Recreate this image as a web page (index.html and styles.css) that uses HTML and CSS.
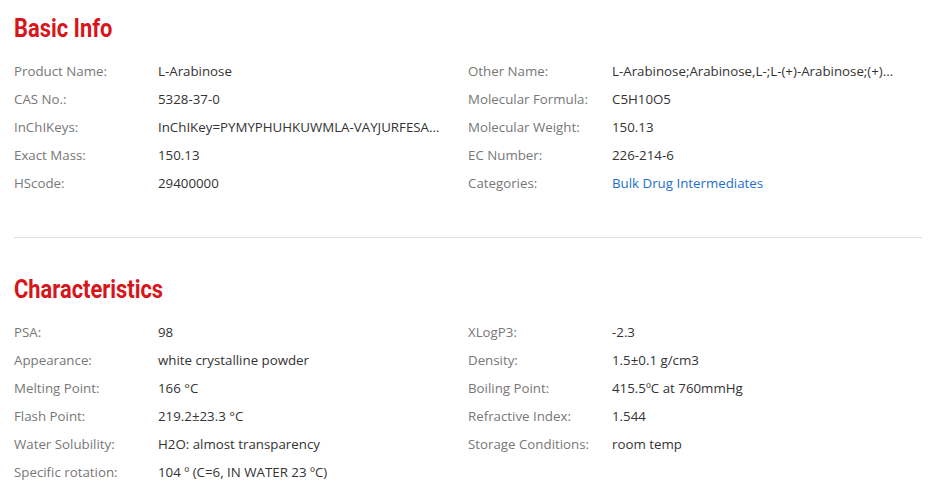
FILE: index.html
```html
<!DOCTYPE html>
<html>
<head>
<meta charset="utf-8">
<link rel="stylesheet" href="styles.css">
</head>
<body>
<div class="page">
  <section class="block">
    <h2 class="title">Basic Info</h2>
    <div class="grid">
      <div class="col">
        <div class="row"><span class="label">Product Name:</span><span class="value">L-Arabinose</span></div>
        <div class="row"><span class="label">CAS No.:</span><span class="value">5328-37-0</span></div>
        <div class="row"><span class="label">InChIKeys:</span><span class="value">InChIKey=PYMYPHUHKUWMLA-VAYJURFESA...</span></div>
        <div class="row"><span class="label">Exact Mass:</span><span class="value">150.13</span></div>
        <div class="row"><span class="label">HScode:</span><span class="value">29400000</span></div>
      </div>
      <div class="col">
        <div class="row"><span class="label">Other Name:</span><span class="value">L-Arabinose;Arabinose,L-;L-(+)-Arabinose;(+)...</span></div>
        <div class="row"><span class="label">Molecular Formula:</span><span class="value">C5H10O5</span></div>
        <div class="row"><span class="label">Molecular Weight:</span><span class="value">150.13</span></div>
        <div class="row"><span class="label">EC Number:</span><span class="value">226-214-6</span></div>
        <div class="row"><span class="label">Categories:</span><span class="value"><a class="link" href="#">Bulk Drug Intermediates</a></span></div>
      </div>
    </div>
  </section>
  <hr class="divider">
  <section class="block">
    <h2 class="title">Characteristics</h2>
    <div class="grid">
      <div class="col">
        <div class="row"><span class="label">PSA:</span><span class="value">98</span></div>
        <div class="row"><span class="label">Appearance:</span><span class="value">white crystalline powder</span></div>
        <div class="row"><span class="label">Melting Point:</span><span class="value">166 °C</span></div>
        <div class="row"><span class="label">Flash Point:</span><span class="value">219.2±23.3 °C</span></div>
        <div class="row"><span class="label">Water Solubility:</span><span class="value">H2O: almost transparency</span></div>
        <div class="row"><span class="label">Specific rotation:</span><span class="value">104 º (C=6, IN WATER 23 ºC)</span></div>
      </div>
      <div class="col">
        <div class="row"><span class="label">XLogP3:</span><span class="value">-2.3</span></div>
        <div class="row"><span class="label">Density:</span><span class="value">1.5±0.1 g/cm3</span></div>
        <div class="row"><span class="label">Boiling Point:</span><span class="value">415.5ºC at 760mmHg</span></div>
        <div class="row"><span class="label">Refractive Index:</span><span class="value">1.544</span></div>
        <div class="row"><span class="label">Storage Conditions:</span><span class="value">room temp</span></div>
      </div>
    </div>
  </section>
</div>
</body>
</html>
```
FILE: styles.css
```css
html, body {
  margin: 0;
  padding: 0;
  background: #fff;
}
.page {
  width: 908px;
  padding: 14px 0 0 14px;
  font-family: "Open Sans", "Noto Sans", "Liberation Sans", sans-serif;
  font-size: 13.3px;
}
.title {
  margin: 0 0 13px 0;
  font-family: "Roboto", "Liberation Sans", sans-serif;
  font-weight: bold;
  font-size: 25px;
  line-height: 30px;
  color: #d7151b;
  transform: scaleX(0.875);
  transform-origin: left center;
}
.grid {
  display: grid;
  grid-template-columns: 454px 454px;
}
.row {
  display: flex;
  height: 28px;
  align-items: center;
}
.label {
  width: 144px;
  flex: none;
  color: #777;
}
.value {
  color: #333;
  white-space: nowrap;
}
.link {
  color: #1d6fcf;
  text-decoration: none;
}
.divider {
  border: 0;
  border-top: 1px solid #e0e0e0;
  margin: 40px 0 37px 0;
}
```
